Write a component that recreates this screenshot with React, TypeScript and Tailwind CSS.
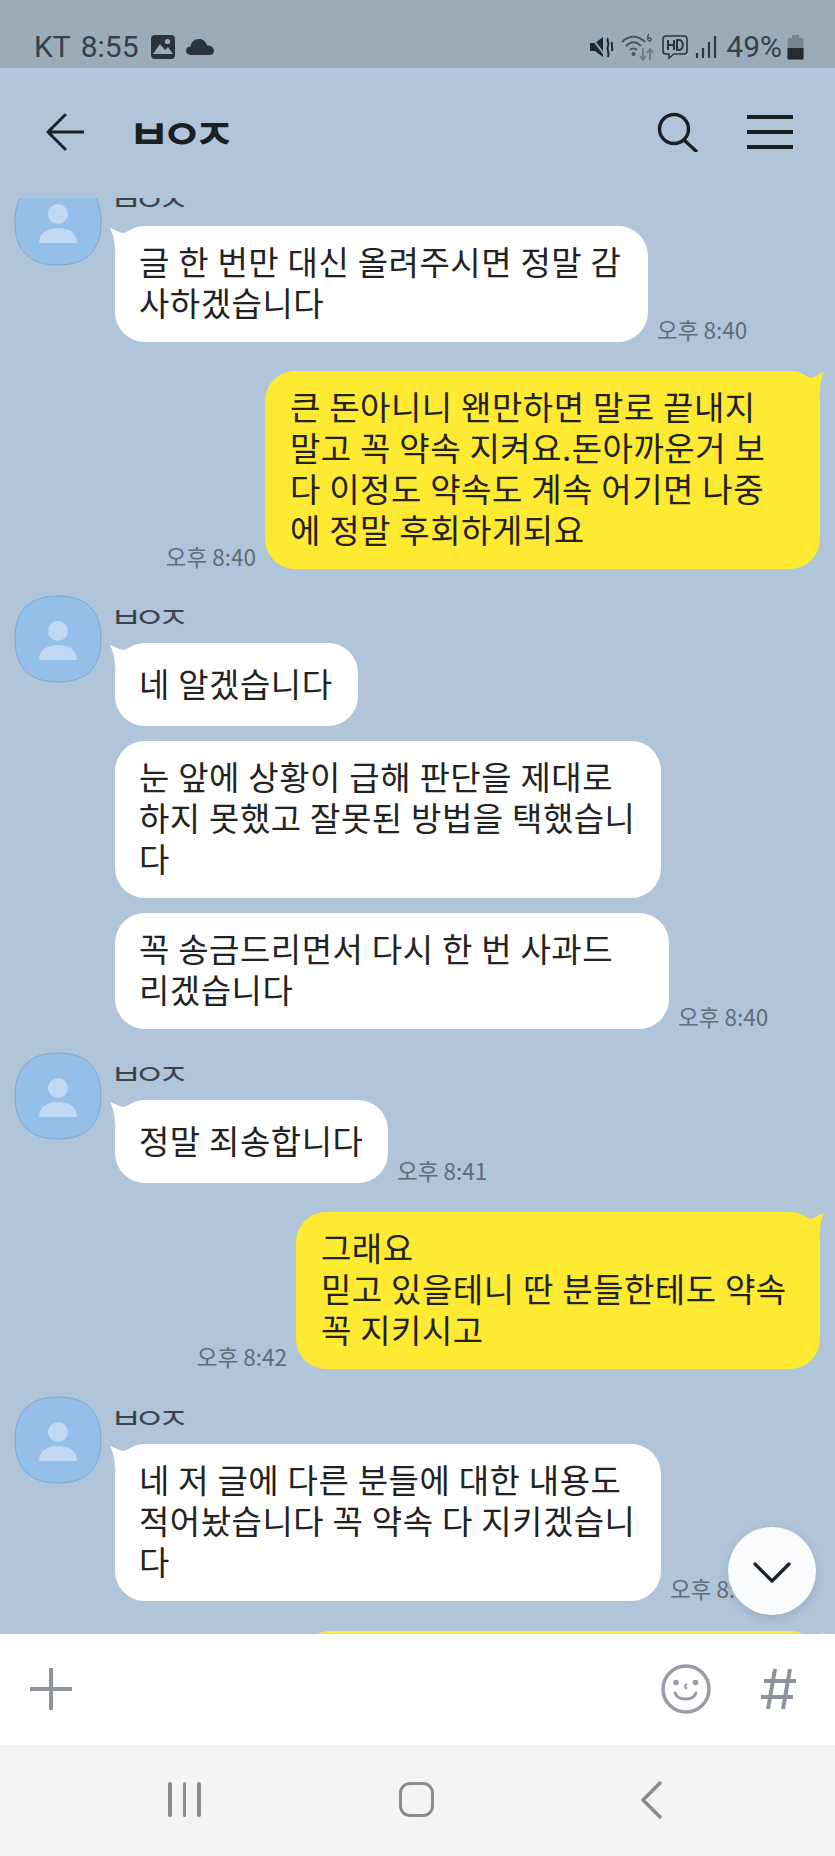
import React from "react";

const FONT = "font-['Noto_Sans_CJK_KR','Noto_Sans',sans-serif]";

function Avatar() {
  return (
    <div className="w-[88px] h-[88px] shrink-0">
      <svg width="88" height="88" viewBox="0 0 88 88">
        <path d="M44 1C72 1 87 15 87 44C87 73 72 87 44 87C16 87 1 73 1 44C1 15 16 1 44 1Z" fill="#93bfe8" stroke="#7fa5cc" strokeWidth="1" />
        <circle cx="44" cy="36" r="10" fill="#c0d8f2" />
        <path d="M25 65C25 55 33 50 44 50C55 50 63 55 63 65Z" fill="#c0d8f2" />
      </svg>
    </div>
  );
}

function Time({ children }: { children: React.ReactNode }) {
  return <div className="text-[22.5px] leading-[26px] text-[#5f6c79] whitespace-nowrap shrink-0">{children}</div>;
}

function Bubble({ w, tail, yellow, single, children }: { w: string; tail?: boolean; yellow?: boolean; single?: boolean; children?: React.ReactNode }) {
  return (
    <div className={`${w} relative rounded-[30px] pr-[10px] ${yellow ? "pl-[25px] bg-[#fee933]" : "pl-[24px] bg-white"} ${single ? "pt-[20px] pb-[22px]" : "pt-[15px] pb-[19px]"} text-[33px] leading-[41px] tracking-[0.5px] [word-spacing:0.5px] text-[#222222] whitespace-nowrap`}>
      {tail && !yellow && (
        <svg className="absolute left-[-5px] top-[1px]" width="28" height="24" viewBox="0 0 28 24">
          <path d="M0 1C6 3 10 6 14 6L28 0V24H5C5 14 3 7 0 1Z" fill="#ffffff" />
        </svg>
      )}
      {tail && yellow && (
        <svg className="absolute right-[-4px] top-0" width="28" height="24" viewBox="0 0 28 24">
          <path d="M28 1C22 3 18 7 14 7L0 0V24H24C24 14 25 7 28 1Z" fill="#fee933" />
        </svg>
      )}
      <div className="relative">{children}</div>
    </div>
  );
}

function Name() {
  return (
    <div className="h-[33px] pt-[9px]">
      <div className="ml-[-5px] text-[28px] leading-[24px] tracking-[-6.9px] scale-x-[1.25] origin-left text-[#3c444d] whitespace-nowrap">ㅂㅇㅈ</div>
    </div>
  );
}

function Incoming({ className, children }: { className: string; children: React.ReactNode }) {
  return (
    <div className={`flex pl-[14px] gap-[13px] ${className}`}>
      <Avatar />
      <div className="flex flex-col gap-[15px]">{children}</div>
    </div>
  );
}

function Row({ children }: { children: React.ReactNode }) {
  return <div className="flex items-end gap-[9px]">{children}</div>;
}

function Outgoing({ className, time, w, children }: { className: string; time: string; w: string; children: React.ReactNode }) {
  return (
    <div className={`flex items-end justify-end gap-[9px] pr-[15px] ${className}`}>
      <Time>{time}</Time>
      <Bubble w={w} yellow tail>{children}</Bubble>
    </div>
  );
}

export default function App() {
  return (
    <div className={`w-[835px] h-[1856px] flex flex-col overflow-hidden bg-[#b0c5da] ${FONT}`}>
      {/* status bar */}
      <div className="h-[68px] shrink-0 bg-[#9aabba] flex items-end justify-between pl-[34px] pr-[31px] pb-[3px] text-[#36404a] font-['Roboto',sans-serif] text-[30px] leading-[36px]">
        <div className="flex items-center gap-[10px]">
          <span>KT</span>
          <span>8:55</span>
          <svg width="26" height="26" viewBox="0 0 26 26" className="ml-[1px]">
            <rect x="1" y="1" width="24" height="24" rx="4" fill="#2b343d" />
            <circle cx="17.5" cy="7.5" r="2.6" fill="#9aabba" />
            <path d="M3 20L10 10L15 16L18 13L23 20Z" fill="#9aabba" />
          </svg>
          <svg width="28" height="18" viewBox="0 0 28 18">
            <path d="M6 17C2 17 0 15 0 12.5C0 10 2 8.5 4.5 8.5C5 4 8.500 1 13 1C17 1 20 3.500 21 7.500C25 7.500 28 9.500 28 12.500C28 15.500 26 17 23 17Z" fill="#2b343d" />
          </svg>
        </div>
        <div className="flex items-center gap-[6px]">
          <svg width="26" height="26" viewBox="0 0 26 26">
            <path d="M1 9H6L14 3V23L6 17H1Z" fill="#1f262d" />
            <path d="M2 3L18 24" stroke="#9aabba" strokeWidth="2" />
            <path d="M19 4C17 7 21 9 19 12C17 15 21 18 19 23M23 8C22 11 24 13 23 17" stroke="#1f262d" strokeWidth="2" fill="none" />
          </svg>
          <svg width="34" height="30" viewBox="0 0 34 30">
            <path d="M1 10C8 3 17 3 24 10M5 14C10 9 15 9 20 14M9 18C11 16 14 16 16 18" stroke="#4b5661" strokeWidth="2" fill="none" />
            <circle cx="12.500" cy="22" r="2" fill="#4b5661" />
            <path d="M22 16V27M19 24L22 28L25 24" stroke="#6d7a86" strokeWidth="1.800" fill="none" />
            <path d="M29 28V17M26 21L29 17L32 21" stroke="#6d7a86" strokeWidth="1.800" fill="none" />
            <path d="M28 2C26 4 26 8 28 9C30 9 31 7 29 6C28 5.500 27 6 26.500 7" stroke="#4b5661" strokeWidth="1.500" fill="none" />
          </svg>
          <svg width="28" height="26" viewBox="0 0 28 26">
            <path d="M5 2H23C25 2 26 3 26 5V17C26 19 25 20 23 20H13L8 24V20H5C3 20 2 19 2 17V5C2 3 3 2 5 2Z" stroke="#2b343d" strokeWidth="1.600" fill="none" />
            <path d="M7 6V16M13 6V16M7 11H13" stroke="#2b343d" strokeWidth="2" />
            <path d="M16 6V16H18C23 16 23 6 18 6Z" stroke="#2b343d" strokeWidth="2" fill="none" />
          </svg>
          <svg width="22" height="24" viewBox="0 0 22 24">
            <path d="M2 18V23M8 13V23M14 7V23M20 1V23" stroke="#2f3841" strokeWidth="2.200" />
          </svg>
          <span className="ml-[3px]">49%</span>
          <svg width="17" height="26" viewBox="0 0 17 26" className="ml-[-1px]">
            <path d="M5 1H12V4H15C16 4 16.500 5 16.500 6V24C16.500 25 16 25.500 15 25.500H2C1 25.500 0.500 25 0.500 24V6C0.500 5 1 4 2 4H5Z" fill="#778591" />
            <path d="M0.500 14H16.500V24C16.500 25 16 25.500 15 25.500H2C1 25.500 0.500 25 0.500 24Z" fill="#242c33" />
          </svg>
        </div>
      </div>

      {/* header */}
      <div className="h-[130px] shrink-0 flex items-center pl-[46px] pr-[42px] pb-[2px]">
        <svg width="38" height="38" viewBox="0 0 38 38" fill="none" stroke="#1c1f22" strokeWidth="3" strokeLinecap="round" strokeLinejoin="round">
          <path d="M37 19H2M19 2L2 19L19 36" />
        </svg>
        <div className="ml-[44px] text-[40px] leading-[44px] font-bold tracking-[-8.4px] scale-x-[1.15] origin-left text-[#1c1f22] whitespace-nowrap">ㅂㅇㅈ</div>
        <div className="ml-auto flex items-center gap-[49px]">
          <svg width="41" height="40" viewBox="0 0 41 40" fill="none" stroke="#1c1f22" strokeWidth="3.400" strokeLinecap="round">
            <circle cx="17" cy="17" r="14.500" />
            <path d="M27 28L39 39" />
          </svg>
          <div className="flex flex-col gap-[11px] w-[46px]">
            <div className="h-[4px] bg-[#1c1f22]" />
            <div className="h-[4px] bg-[#1c1f22]" />
            <div className="h-[4px] bg-[#1c1f22]" />
          </div>
        </div>
      </div>

      {/* chat */}
      <div className="flex-1 min-h-0 overflow-hidden relative flex flex-col">
        <Incoming className="mt-[-20px]">
          <Name />
          <Row>
            <Bubble w="w-[533px]" tail>글 한 번만 대신 올려주시면 정말 감<br />사하겠습니다</Bubble>
            <Time>오후 8:40</Time>
          </Row>
        </Incoming>

        <Outgoing className="mt-[29px]" time="오후 8:40" w="w-[555px]">
          큰 돈아니니 왠만하면 말로 끝내지<br />말고 꼭 약속 지켜요.돈아까운거 보<br />다 이정도 약속도 계속 어기면 나중<br />에 정말 후회하게되요
        </Outgoing>

        <Incoming className="mt-[26px]">
          <Name />
          <Bubble w="w-[243px]" tail single>네 알겠습니다</Bubble>
          <Bubble w="w-[546px]">눈 앞에 상황이 급해 판단을 제대로<br />하지 못했고 잘못된 방법을 택했습니<br />다</Bubble>
          <Row>
            <Bubble w="w-[554px]">꼭 송금드리면서 다시 한 번 사과드<br />리겠습니다</Bubble>
            <Time>오후 8:40</Time>
          </Row>
        </Incoming>

        <Incoming className="mt-[23px]">
          <Name />
          <Row>
            <Bubble w="w-[273px]" tail single>정말 죄송합니다</Bubble>
            <Time>오후 8:41</Time>
          </Row>
        </Incoming>

        <Outgoing className="mt-[29px]" time="오후 8:42" w="w-[524px]">
          그래요<br />믿고 있을테니 딴 분들한테도 약속<br />꼭 지키시고
        </Outgoing>

        <Incoming className="mt-[27px]">
          <Name />
          <Row>
            <Bubble w="w-[546px]" tail>네 저 글에 다른 분들에 대한 내용도<br />적어놨습니다 꼭 약속 다 지키겠습니<br />다</Bubble>
            <Time>오후 8:43</Time>
          </Row>
        </Incoming>

        <div className="mt-[30px] self-end mr-[15px] h-[60px] shrink-0">
          <Bubble w="w-[520px] h-[60px]" yellow tail />
        </div>

        {/* scroll-to-bottom button */}
        <div className="absolute left-[728px] top-[1329px] w-[88px] h-[88px] rounded-full bg-[#fbfcfe] shadow-[0_3px_10px_rgba(60,80,100,0.22)] flex items-center justify-center">
          <svg width="38" height="22" viewBox="0 0 38 22" fill="none" stroke="#1c1f22" strokeWidth="3.200" strokeLinecap="round" strokeLinejoin="round" className="mt-[4px]">
            <path d="M2 2L19 19L36 2" />
          </svg>
        </div>
      </div>

      {/* input bar */}
      <div className="h-[111px] shrink-0 bg-white flex items-center pl-[30px] pr-[38px] pb-[1px]">
        <svg width="42" height="42" viewBox="0 0 42 42" stroke="#8d929c" strokeWidth="4">
          <path d="M21 0V42M0 21H42" />
        </svg>
        <svg width="50" height="50" viewBox="0 0 50 50" fill="none" className="ml-auto">
          <circle cx="25" cy="25" r="23" stroke="#979ca6" strokeWidth="3.500" />
          <circle cx="15" cy="18.500" r="2.800" fill="#979ca6" />
          <circle cx="34.500" cy="18.500" r="2.800" fill="#979ca6" />
          <path d="M26 20C23.500 21 23.500 24 26 24.500" stroke="#979ca6" strokeWidth="2" />
          <path d="M14 29C17 37 32 37 35 29" stroke="#979ca6" strokeWidth="3" strokeLinecap="round" />
        </svg>
        <svg width="36" height="42" viewBox="0 0 36 42" fill="none" stroke="#8d929c" strokeWidth="4" className="ml-[50px]">
          <path d="M14 1L7 41M29 1L22 41M3 13H35M0 29H32" />
        </svg>
      </div>

      {/* nav bar */}
      <div className="h-[111px] shrink-0 bg-[#f4f4f4] flex items-center pb-[2px]">
        <div className="flex gap-[11px] ml-[168px]">
          <div className="w-[3.500px] h-[35px] rounded-full bg-[#8b8b8b]" />
          <div className="w-[3.500px] h-[35px] rounded-full bg-[#8b8b8b]" />
          <div className="w-[3.500px] h-[35px] rounded-full bg-[#8b8b8b]" />
        </div>
        <div className="ml-[198px] w-[35px] h-[35px] rounded-[11px] border-[3.500px] border-[#8b8b8b]" />
        <svg width="22" height="38" viewBox="0 0 22 38" fill="none" stroke="#8b8b8b" strokeWidth="3.500" strokeLinecap="round" strokeLinejoin="round" className="ml-[206px]">
          <path d="M20 2L3 19L20 36" />
        </svg>
      </div>
    </div>
  );
}
